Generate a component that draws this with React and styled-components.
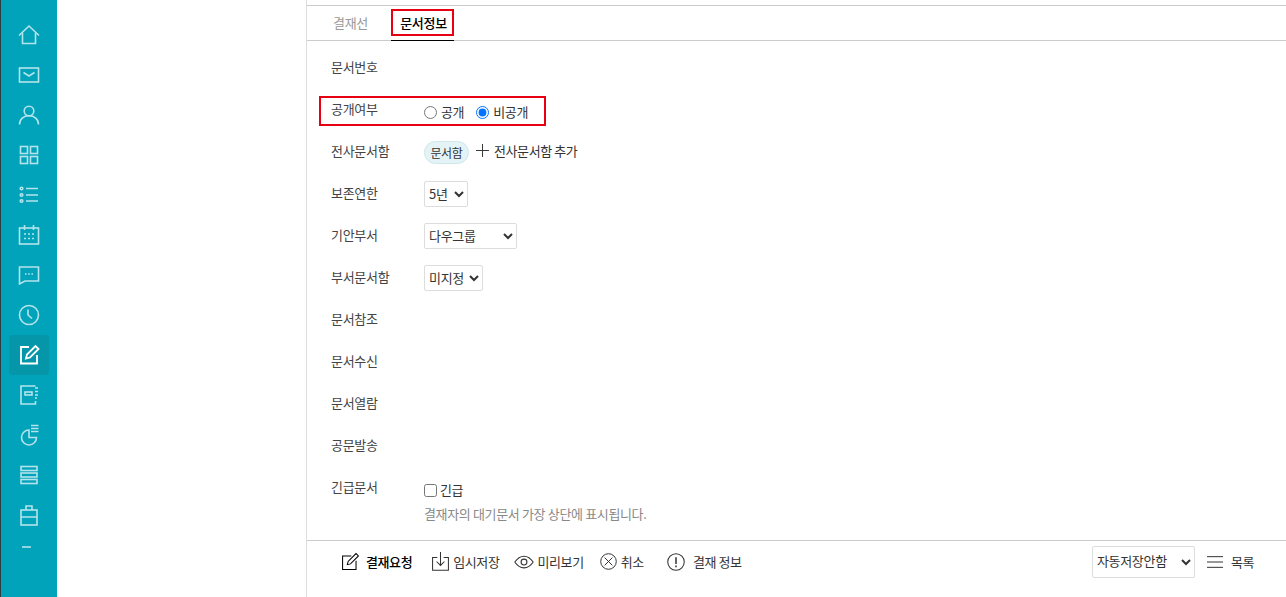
import React from 'react';
import styled, { createGlobalStyle } from 'styled-components';

const Global = createGlobalStyle`
  html, body { margin: 0; padding: 0; background: #fff; }
  body {
    font-family: "Noto Sans CJK KR", "Noto Sans", sans-serif;
    font-size: 13px;
    color: #333;
    overflow: hidden;
  }
`;

const Page = styled.div`
  display: flex;
  width: 1286px;
  height: 597px;
  overflow: hidden;
`;

const Sidebar = styled.nav`
  box-sizing: border-box;
  flex: none;
  width: 57px;
  border-left: 1px solid #2c3d44;
  background: #00a3ba;
  padding: 15px 0 0 8px;
  display: flex;
  flex-direction: column;
`;

const NavItem = styled.a`
  flex: none;
  display: flex;
  align-items: center;
  justify-content: center;
  width: 40px;
  height: ${p => p.$h || 40}px;
  border-radius: 4px;
  background: ${p => (p.$active ? '#0596aa' : 'transparent')};
  color: ${p => (p.$active ? '#ffffff' : '#b4e4eb')};
`;

const Spacer = styled.div`
  flex: none;
  width: 249px;
`;

const Main = styled.main`
  box-sizing: border-box;
  flex: 1;
  display: flex;
  flex-direction: column;
  border-left: 1px solid #ddd;
  padding-top: 5px;
`;

const Tabs = styled.div`
  display: flex;
  height: 34px;
  border-top: 1px solid #ccc;
  border-bottom: 1px solid #ccc;
  padding-left: 26px;
  gap: 23px;
`;

const Tab = styled.a`
  position: relative;
  display: block;
  height: 34px;
  line-height: 34px;
  letter-spacing: -0.3px;
  color: ${p => (p.$active ? '#000' : '#999')};
  ${p => p.$active && `
    width: 61px;
    padding-left: 2px;
    text-align: center;
    border-bottom: 1px solid #000;
    font-weight: 500;
    &::after {
      content: '';
      position: absolute;
      left: 0;
      top: 3px;
      width: 63px;
      height: 27px;
      box-sizing: border-box;
      border: 2px solid #e60012;
    }
  `}
`;

const Form = styled.div`
  flex: 1;
  padding: 5px 0 0 24px;
`;

const Row = styled.div`
  position: relative;
  display: grid;
  grid-template-columns: 93px 1fr;
  height: ${p => (p.$tall ? '74px' : '42px')};
  ${p => p.$marked && `
    &::after {
      content: '';
      position: absolute;
      left: -12px;
      top: 8px;
      width: 227px;
      height: 30px;
      box-sizing: border-box;
      border: 2px solid #e60012;
    }
  `}
`;

const Label = styled.div`
  padding-top: 11px;
  line-height: 20px;
  letter-spacing: -0.3px;
  color: #444;
`;

const Control = styled.div`
  padding-top: ${p => p.$top || 9}px;
  display: flex;
  flex-wrap: wrap;
  align-items: center;
  align-content: flex-start;
  letter-spacing: -0.35px;
`;

const Option = styled.label`
  display: inline-flex;
  align-items: center;
  gap: ${p => p.$gap ?? 4}px;
  margin-right: 12px;
  line-height: 20px;
  input { margin: 0; width: 13px; height: 13px; }
`;

const Chip = styled.span`
  box-sizing: border-box;
  width: 45px;
  height: 23px;
  line-height: 21px;
  text-align: center;
  border: 1px solid #cfe6ea;
  border-radius: 12px;
  background: #e4f3f6;
  font-size: 12px;
  letter-spacing: -0.3px;
`;

const AddLink = styled.a`
  display: inline-flex;
  align-items: center;
  gap: 5px;
  margin: 0 0 4px 7px;
  letter-spacing: -0.4px;
`;

const Select = styled.select`
  box-sizing: border-box;
  width: ${p => p.$w}px;
  height: ${p => p.$h || 26}px;
  padding: 0 0 2px;
  border: 1px solid #ddd;
  border-radius: 2px;
  background: #fff;
  color: #333;
  font-family: inherit;
  font-size: 13px;
  letter-spacing: -0.3px;
`;

const Hint = styled.div`
  flex-basis: 100%;
  margin-top: 4px;
  line-height: 20px;
  color: #888;
`;

const Footer = styled.footer`
  box-sizing: border-box;
  height: 57px;
  display: flex;
  align-items: center;
  justify-content: space-between;
  border-top: 1px solid #ccc;
  padding: 0 32px 15px 34px;
`;

const Actions = styled.div`
  display: flex;
  align-items: center;
`;

const Action = styled.a`
  display: inline-flex;
  align-items: center;
  gap: ${p => p.$gap ?? 4}px;
  margin-right: ${p => p.$after ?? 16}px;
  letter-spacing: -0.4px;
  color: ${p => (p.$primary ? '#000' : '#333')};
  font-weight: ${p => (p.$primary ? 500 : 400)};
  white-space: nowrap;
`;

const Side = styled.div`
  display: flex;
  align-items: center;
  gap: 12px;
`;

const Icon = ({ size = 24, children, sw = 1.6 }) => (
  <svg width={size} height={size} viewBox="0 0 24 24" fill="none" stroke="currentColor" strokeWidth={sw}>
    {children}
  </svg>
);

const navIcons = [
  <><path d="M2 12.500 12 3l10 9.500" /><path d="M5.500 10v10.500h13V10" /></>,
  <><rect x="2.500" y="5" width="19" height="14" /><path d="M6.500 9.500 12 13l5.500-3.500" /></>,
  <><circle cx="12" cy="8" r="4.800" /><path d="M2.500 21.500c0-5.500 4.200-8.700 9.500-8.700s9.500 3.200 9.500 8.700" /></>,
  <><rect x="3.500" y="3.500" width="7" height="7" /><rect x="13.500" y="3.500" width="7" height="7" /><rect x="3.500" y="13.500" width="7" height="7" /><rect x="13.500" y="13.500" width="7" height="7" /></>,
  <><circle cx="4.500" cy="5.500" r="1.300" /><circle cx="4.500" cy="12" r="1.300" /><circle cx="4.500" cy="18" r="1.300" /><path d="M9 5.500h12M9 12h12M9 18h12" /></>,
  <><rect x="2.500" y="5" width="19" height="16" /><path d="M7.500 2v5M16.500 2v5" /><path d="M7 11h2M11 11h2M15 11h2M7 15.500h2M11 15.500h2M15 15.500h2" /></>,
  <><path d="M2.500 4h19v14H8l-5.500 3z" /><path d="M8 11h1.600M11.200 11h1.600M14.400 11H16" /></>,
  <><circle cx="12" cy="12" r="9.500" /><path d="M11 6.500V12l4 3.500" /></>,
  <><path d="M12 4H4v16.500h16V12" strokeWidth="1.800" /><path d="M9 15.500l1-4L18.500 3l3 3-8.500 8.500z" strokeWidth="1.800" /></>,
  <><path d="M18.500 3H4v18h14.500v-3" /><rect x="8" y="9" width="7" height="3" /><path d="M18 5h3M18 8.500h3M18 12h3M18 15h2" strokeWidth="1.300" /></>,
  <><path d="M12 7a7.500 7.500 0 1 0 7.500 7.500H12z" /><path d="M14 2.500h7.500M14 5.500h7.500M14 8.500h7.500" /></>,
  <><rect x="4" y="3.500" width="16" height="4" /><rect x="4" y="10" width="16" height="4" /><rect x="4" y="16.500" width="16" height="4" /></>,
  <><rect x="4" y="7" width="16" height="15" /><path d="M9 7V3h6v4M4 14h16" /></>,
];

const labels = ['문서참조', '문서수신', '문서열람', '공문발송'];

export default function App() {
  return (
    <Page>
      <Global />
      <Sidebar>
        {navIcons.map((shape, i) => (
          <NavItem key={i} $active={i === 8}>
            <Icon>{shape}</Icon>
          </NavItem>
        ))}
        <NavItem $h={24}>
          <Icon><path d="M5 12h9" /></Icon>
        </NavItem>
      </Sidebar>
      <Spacer />
      <Main>
        <Tabs>
          <Tab>결재선</Tab>
          <Tab $active>문서정보</Tab>
        </Tabs>
        <Form>
          <Row>
            <Label>문서번호</Label>
          </Row>
          <Row $marked>
            <Label>공개여부</Label>
            <Control $top={14}>
              <Option><input type="radio" name="open" />공개</Option>
              <Option><input type="radio" name="open" defaultChecked />비공개</Option>
            </Control>
          </Row>
          <Row>
            <Label>전사문서함</Label>
            <Control $top={11}>
              <Chip>문서함</Chip>
              <AddLink>
                <Icon size={13} sw={1.8}><path d="M12 0v24M0 12h24" /></Icon>
                전사문서함 추가
              </AddLink>
            </Control>
          </Row>
          <Row>
            <Label>보존연한</Label>
            <Control><Select $w={44}><option>5년</option></Select></Control>
          </Row>
          <Row>
            <Label>기안부서</Label>
            <Control><Select $w={93}><option>다우그룹</option></Select></Control>
          </Row>
          <Row>
            <Label>부서문서함</Label>
            <Control><Select $w={59}><option>미지정</option></Select></Control>
          </Row>
          {labels.map(text => (
            <Row key={text}><Label>{text}</Label></Row>
          ))}
          <Row $tall>
            <Label>긴급문서</Label>
            <Control $top={14}>
              <Option $gap={3}><input type="checkbox" />긴급</Option>
              <Hint>결재자의 대기문서 가장 상단에 표시됩니다.</Hint>
            </Control>
          </Row>
        </Form>
        <Footer>
          <Actions>
            <Action $primary $gap={6} $after={19}>
              <Icon size={19} sw={1.3}>
                <path d="M13 5H2v17h17V11" />
                <path d="M8 16l1-4L19 2l3 3-10 10z" />
              </Icon>
              결재요청
            </Action>
            <Action $gap={3} $after={14}>
              <Icon size={19} sw={1.3}>
                <path d="M8 7H2v16h20V7h-6" />
                <path d="M12 0v17M7 12l5 5 5-5" />
              </Icon>
              임시저장
            </Action>
            <Action $gap={4} $after={16}>
              <Icon size={20} sw={1.3}>
                <path d="M1 12c3-4.500 6.500-7 11-7s8 2.500 11 7c-3 4.500-6.500 7-11 7s-8-2.500-11-7z" />
                <circle cx="12" cy="12" r="3.500" />
              </Icon>
              미리보기
            </Action>
            <Action $after={23}>
              <Icon size={17} sw={1.4}>
                <circle cx="12" cy="12" r="11" />
                <path d="M6.500 6.500l11 11M17.500 6.500l-11 11" />
              </Icon>
              취소
            </Action>
            <Action $gap={8}>
              <Icon size={18} sw={1.4}>
                <circle cx="12" cy="12" r="11" />
                <path d="M12 5.500v9M12 16.500v2.500" strokeWidth="2" />
              </Icon>
              결재 정보
            </Action>
          </Actions>
          <Side>
            <Select $w={103} $h={32}><option>자동저장안함</option></Select>
            <Action $gap={8} $after={0}>
              <Icon size={16} sw={1.5}>
                <path d="M0 4h24M0 12h24M0 20h24" />
              </Icon>
              목록
            </Action>
          </Side>
        </Footer>
      </Main>
    </Page>
  );
}
